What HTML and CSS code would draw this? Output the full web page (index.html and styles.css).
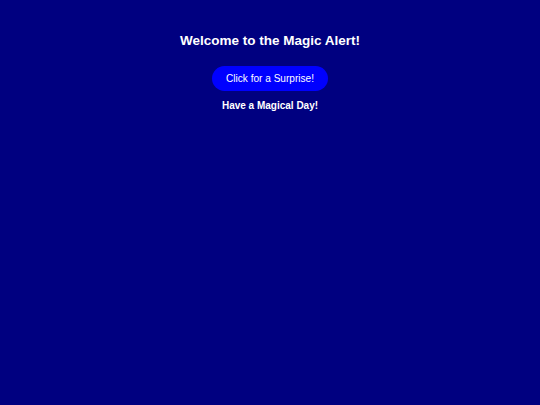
FILE: index.html
```html
<!DOCTYPE html>
<html>
<head>
<meta charset="utf-8">
<link rel="stylesheet" href="styles.css">
</head>
<body>
<main class="page">
  <h1 class="title">Welcome to the Magic Alert!</h1>
  <button class="surprise">Click for a Surprise!</button>
  <p class="note">Have a Magical Day!</p>
</main>
</body>
</html>
```
FILE: styles.css
```css
html, body {
  margin: 0;
  padding: 0;
  background: #000080;
  height: 100%;
}
body {
  font-family: "Liberation Sans", Arial, sans-serif;
  color: #ffffff;
}
.page {
  display: flex;
  flex-direction: column;
  align-items: center;
  padding-top: 33px;
}
.title {
  margin: 0;
  font-size: 13.5px;
  font-weight: bold;
  line-height: 16px;
}
.surprise {
  margin-top: 17px;
  width: 116px;
  height: 25px;
  border: none;
  border-radius: 12.5px;
  background: #0000ff;
  color: #ffffff;
  font-family: "Liberation Sans", Arial, sans-serif;
  font-size: 10.1px;
  padding: 0;
}
.note {
  margin: 8px 0 0;
  font-size: 10px;
  font-weight: bold;
  line-height: 13px;
}
```
